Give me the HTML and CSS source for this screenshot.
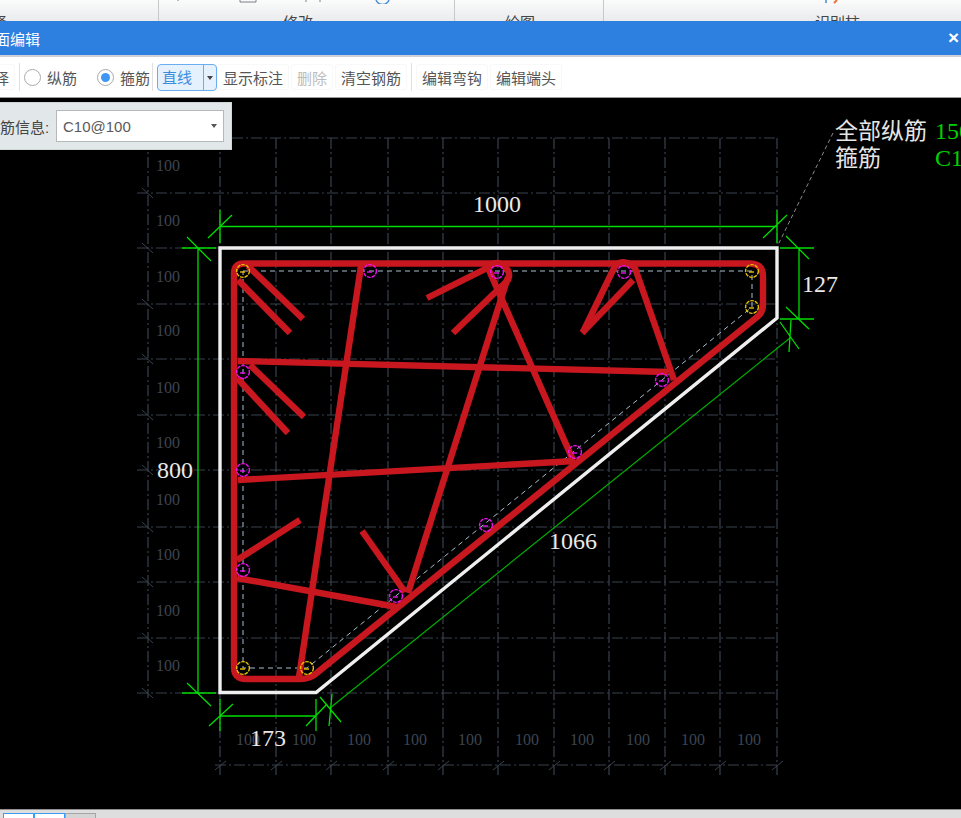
FILE: index.html
```html
<!DOCTYPE html>
<html>
<head>
  <meta charset="UTF-8" />
  <title>截面编辑</title>
  <link rel="stylesheet" href="styles.css">
</head>
<body>
  <div class="ribbon">
    <div class="group group-a"><span class="group-name">择</span></div>
    <div class="group group-b"><span class="group-name">修改</span><span class="caret"></span></div>
    <div class="group group-c"><span class="group-name">绘图</span><span class="caret"></span></div>
    <div class="group group-d"><span class="group-name">识别柱</span></div>
    <svg class="ribbon-bits" width="961" height="4" viewBox="0 0 961 4">
      <path d="M178 0v1M240 0v2h16v-2M306 0v2M320 0v2" stroke="#7d8186" fill="none"/>
      <path d="M376 0a7 7 0 0 0 13 0" stroke="#4a90d9" stroke-width="1.5" fill="none"/>
      <path d="M826 0v3" stroke="#6fa8dc" stroke-width="2"/>
      <path d="M834 3l3-3" stroke="#e8743b" stroke-width="2"/>
    </svg>
  </div>

  <div class="titlebar">
    <span class="title">截面编辑</span>
    <span class="close">×</span>
  </div>

  <div class="toolbar">
    <button class="tool first">选择</button>
    <span class="sep"></span>
    <label class="radio radio-a"><i class="dot"></i>纵筋</label>
    <label class="radio radio-b"><i class="dot on"></i>箍筋</label>
    <span class="sep sep-b"></span>
    <div class="combo"><span class="combo-text">直线</span><span class="combo-arrow"></span></div>
    <button class="tool">显示标注</button>
    <button class="tool off">删除</button>
    <button class="tool">清空钢筋</button>
    <span class="sep"></span>
    <button class="tool">编辑弯钩</button>
    <button class="tool">编辑端头</button>
  </div>

  <div class="canvas">
    <svg class="drawing" width="961" height="711" viewBox="0 98 961 711">
      <defs>
        <g id="pin">
          <circle r="6.4" fill="none" stroke-dasharray="3.6 1"/>
          <path d="M-3 1h5" fill="none"/>
        </g>
      </defs>

      <!-- axis grid -->
      <path class="grid" d="M220 138V775M276 138V775M331 138V775M388 138V775M443 138V775M498 138V775M554 138V775M609 138V775M665 138V775M720 138V775M777 138V775M148 138V698"/>
      <path class="grid" d="M137 138H777M137 193H777M137 248H777M137 304H777M137 359H777M137 415H777M137 470H777M137 527H777M137 582H777M137 638H777M137 693H777M215 765H780"/>
      <path class="grid-tick" d="M142 188l11 10M142 243l11 10M142 299l11 10M142 354l11 10M142 410l11 10M142 465l11 10M142 522l11 10M142 577l11 10M142 633l11 10M142 688l11 10"/>
      <path class="grid-tick" d="M215 770l11-9M271 770l11-9M326 770l11-9M383 770l11-9M438 770l11-9M493 770l11-9M549 770l11-9M604 770l11-9M660 770l11-9M715 770l11-9M772 770l11-9"/>
      <g class="axis-num">
        <text x="168" y="171">100</text>
        <text x="168" y="226">100</text>
        <text x="168" y="282">100</text>
        <text x="168" y="336">100</text>
        <text x="168" y="393">100</text>
        <text x="168" y="448">100</text>
        <text x="168" y="505">100</text>
        <text x="168" y="560">100</text>
        <text x="168" y="616">100</text>
        <text x="168" y="671">100</text>
        <text x="248" y="745">100</text>
        <text x="304" y="745">100</text>
        <text x="359" y="745">100</text>
        <text x="415" y="745">100</text>
        <text x="470" y="745">100</text>
        <text x="527" y="745">100</text>
        <text x="582" y="745">100</text>
        <text x="638" y="745">100</text>
        <text x="693" y="745">100</text>
        <text x="749" y="745">100</text>
      </g>

      <!-- leader to the table -->
      <path class="leader" d="M833 133L778 245"/>

      <!-- dimensions -->
      <path class="dim" d="M220 226.5H777M220 210V243M208 238L232 215M777 210V243M763 238L787 215"/>
      <path class="dim" d="M198 248V693M182 248H216M187 237L211 261M182 693H216M187 683L211 706"/>
      <path class="dim" d="M220 716H316M220 699V731M209 726L233 704M316 699V731M306 726L327 704"/>
      <path class="dim" d="M799 248V319M780 248H814M786 236L809 259M780 319H814M786 307L809 329"/>
      <path class="dim-slant" d="M790 338L330 708"/>
      <path class="dim" d="M791 320L789 352M780 322L799 349M332 694L329 726M320 697L341 722"/>

      <!-- section outline -->
      <path class="outline" d="M220 248H777V318L316 692.5H220Z"/>
      <path class="inner" d="M243 271H752V307L307 668H243Z"/>

      <!-- stirrups -->
      <g class="rebar">
        <path class="hoop" d="M244 263.5H750Q763 263.5 763 277V304Q763 313 757 317L318 672Q311 679 300 679H246Q234 679 234 667V274Q234 263.5 244 263.5Z"/>
        <path d="M248 266L303 319M238 280L290 333"/>
        <path d="M361 266L299 677"/>
        <path d="M238 361L668 372M674 380L635 268Q624 258 615 266L583 332"/>
        <path d="M250 365L304 417M237 378L288 433"/>
        <path d="M633 280L582 333"/>
        <path d="M427 298L487 268Q498 258 506 268Q511 273 508 280L453 333"/>
        <path d="M508 277L408 593M488 268L573 460"/>
        <path d="M238 480L575 461"/>
        <path d="M237 560L300 520M237 578L397 607"/>
        <path d="M362 531L405 592"/>
      </g>

      <!-- longitudinal bars -->
      <g class="pin-y">
        <use href="#pin" x="243" y="271"/>
        <use href="#pin" x="752" y="271"/>
        <use href="#pin" x="752" y="307"/>
        <use href="#pin" x="243" y="668"/>
        <use href="#pin" x="307" y="668"/>
      </g>
      <g class="pin-m">
        <use href="#pin" x="370" y="271"/>
        <use href="#pin" x="497" y="272"/>
        <use href="#pin" x="624" y="272"/>
        <use href="#pin" x="243" y="372"/>
        <use href="#pin" x="243" y="470"/>
        <use href="#pin" x="243" y="570"/>
        <use href="#pin" x="396" y="596"/>
        <use href="#pin" x="486" y="525"/>
        <use href="#pin" x="575" y="452"/>
        <use href="#pin" x="662" y="380"/>
      </g>

      <g class="dim-num">
        <text x="473" y="212">1000</text>
        <text x="802" y="292">127</text>
        <text x="157" y="478">800</text>
        <text x="549" y="549">1066</text>
        <text x="250" y="746">173</text>
      </g>

      <g class="table">
        <text class="table-label" x="835" y="139">全部纵筋</text>
        <text class="table-label" x="835" y="166">箍筋</text>
        <text class="table-value" x="935" y="139">150</text>
        <text class="table-value" x="935" y="166">C10</text>
      </g>
    </svg>

    <div class="info-panel">
      <span class="info-label">钢筋信息:</span>
      <div class="info-select"><span>C10@100</span><i class="arrow"></i></div>
    </div>
  </div>

  <div class="tabs">
    <span class="tab"></span>
    <span class="tab"></span>
    <span class="tab grey"></span>
  </div>
</body>
</html>
```

FILE: styles.css
```css
html, body {
  margin: 0;
  padding: 0;
}

body {
  width: 961px;
  height: 818px;
  overflow: hidden;
  font-family: "Liberation Sans", "Noto Sans CJK SC", sans-serif;
  background-color: #000;
}

/* ribbon left over behind the dialog */
.ribbon {
  position: relative;
  display: flex;
  height: 21px;
  overflow: hidden;
  background: linear-gradient(#fbfbfb, #e9ebed);
}

.ribbon-bits {
  position: absolute;
  left: 0;
  top: 0;
}

.group {
  display: flex;
  box-sizing: border-box;
  padding-top: 13px;
  border-right: 1px solid #c6c8ca;
  font-size: 15px;
  color: #444;
  line-height: 20px;
}

.group-a { width: 159px; }
.group-b { width: 296px; padding-left: 124px; }
.group-c { width: 149px; padding-left: 50px; }
.group-d { flex: 1; padding-left: 211px; border-right: none; }

.group-a .group-name { margin-left: -8px; }

.caret {
  width: 7px;
  height: 1px;
  margin: 8px 0 0 10px;
  background-color: #aaa;
}

.titlebar {
  display: flex;
  justify-content: space-between;
  align-items: center;
  height: 34px;
  background-color: #2d7fe0;
  color: #fff;
  overflow: hidden;
}

.title {
  margin-left: -20px;
  font-size: 15px;
}

.close {
  margin-right: 2px;
  font-size: 19px;
  font-weight: bold;
}

.toolbar {
  display: flex;
  align-items: center;
  box-sizing: border-box;
  height: 43px;
  border-top: 2px solid #cdd0d6;
  border-bottom: 1px solid #9a9a9a;
  background-color: #fff;
  font-size: 15px;
  color: #555;
  overflow: hidden;
}

.tool {
  box-sizing: border-box;
  height: 26px;
  margin: 0 2px 0 0;
  padding: 0 5px;
  border: 1px solid #f8f8f8;
  border-radius: 3px;
  background-color: #fff;
  font-family: inherit;
  font-size: 15px;
  color: #555;
  white-space: nowrap;
}

.tool.off {
  color: #bcbcbc;
}

.tool.first {
  margin-left: -27px;
}

.sep {
  width: 1px;
  height: 28px;
  margin: 0 4px 0 2px;
  background-color: #e0e0e0;
}

.sep-b { margin-left: 0; }

.radio {
  display: flex;
  align-items: center;
}

.radio-a { width: 73px; }
.radio-b { width: 55px; }

.dot {
  position: relative;
  box-sizing: border-box;
  width: 17px;
  height: 17px;
  margin-right: 6px;
  border: 1px solid #aaa;
  border-radius: 50%;
  background-color: #fff;
}

.dot.on::after {
  content: "";
  position: absolute;
  left: 3px;
  top: 3px;
  width: 9px;
  height: 9px;
  border-radius: 50%;
  background-color: #3f96f3;
}

.combo {
  display: flex;
  box-sizing: border-box;
  width: 60px;
  height: 27px;
  border: 1px solid #6aaef0;
  border-radius: 4px;
  background-color: #e5f1fc;
  color: #3b8de0;
  overflow: hidden;
}

.combo-text {
  box-sizing: border-box;
  width: 46px;
  padding-left: 4px;
  line-height: 26px;
  border-right: 1px solid #6aaef0;
}

.combo-arrow {
  width: 0;
  height: 0;
  margin: 11px 0 0 3px;
  border-top: 4px solid #444;
  border-left: 3.5px solid transparent;
  border-right: 3.5px solid transparent;
}

.canvas {
  position: relative;
  height: 711px;
  background-color: #000;
}

.drawing {
  display: block;
}

.grid {
  fill: none;
  stroke: #39424f;
  stroke-width: 1.2;
  stroke-dasharray: 11 3 2 3;
}

.grid-tick {
  fill: none;
  stroke: #39424f;
  stroke-width: 1;
}

.axis-num text {
  font-family: "Liberation Serif", serif;
  font-size: 16px;
  fill: #3c4552;
  text-anchor: middle;
}

.leader {
  fill: none;
  stroke: #8a8a8a;
  stroke-dasharray: 4 3;
}

.dim {
  fill: none;
  stroke: #00dd00;
  stroke-width: 1.3;
}

.dim-slant {
  fill: none;
  stroke: #00b000;
  stroke-width: 1.2;
}

.outline {
  fill: none;
  stroke: #efefef;
  stroke-width: 3.4;
}

.inner {
  fill: none;
  stroke: #a9bed2;
  stroke-width: 1;
  stroke-dasharray: 5 4;
}

.rebar path {
  fill: none;
  stroke: #c8171f;
  stroke-width: 6.4;
}

.pin-y {
  stroke: #e8c000;
  stroke-width: 1.4;
}

.pin-m {
  stroke: #f010f0;
  stroke-width: 1.4;
}

.dim-num text {
  font-family: "Liberation Serif", serif;
  font-size: 24px;
  fill: #e9e9e9;
}

.table-label {
  font-family: "Noto Sans CJK SC", sans-serif;
  font-size: 23px;
  fill: #e6e6e6;
}

.table-value {
  font-family: "Liberation Serif", serif;
  font-size: 24px;
  fill: #00d000;
}

.info-panel {
  position: absolute;
  left: 0;
  top: 4px;
  display: flex;
  align-items: center;
  box-sizing: border-box;
  width: 232px;
  height: 48px;
  border: 1px solid #cfd6d8;
  border-left: none;
  background-color: #e2e8ea;
  font-size: 15px;
  color: #444;
  overflow: hidden;
}

.info-label {
  flex: none;
  width: 56px;
  margin-left: -15px;
  margin-right: 15px;
  white-space: nowrap;
}

.info-select {
  display: flex;
  justify-content: space-between;
  align-items: center;
  box-sizing: border-box;
  flex: none;
  width: 168px;
  height: 32px;
  padding: 0 6px;
  border: 1px solid #b5b9ba;
  background-color: #fff;
  color: #5a5a5a;
}

.arrow {
  width: 0;
  height: 0;
  border-top: 4px solid #555;
  border-left: 3.5px solid transparent;
  border-right: 3.5px solid transparent;
}

.tabs {
  display: flex;
  box-sizing: border-box;
  height: 9px;
  padding: 3px 0 0 3px;
  border-top: 1px solid #8f8f8f;
  background-color: #dedede;
}

.tab {
  box-sizing: border-box;
  width: 31px;
  height: 8px;
  border: 1px solid #3d9bf5;
  background-color: #fff;
}

.tab.grey {
  border-color: #a5a5a5;
  background-color: #d4d4d4;
}
```
